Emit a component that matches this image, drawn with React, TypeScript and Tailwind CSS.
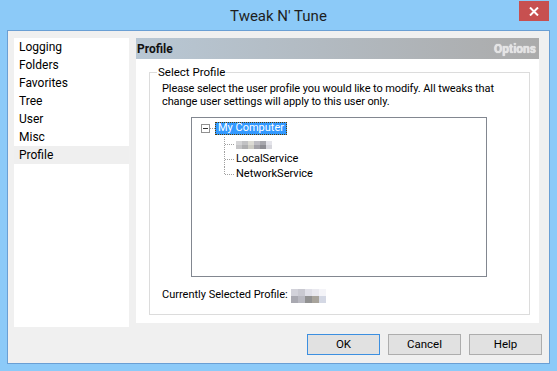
import React from "react";

const menu = ["Logging", "Folders", "Favorites", "Tree", "User", "Misc", "Profile"];

// pixelated (blurred) user name blocks
const blurTree = [
  ["#d4d4d6", "#c2c2c4", "#dcdbd4", "#bdbcc2", "#a7a7ad", "#e4e4ea"],
  ["#c4c4c6", "#aeaeb0", "#cdccc5", "#a3a2a8", "#8d8d93", "#d6d6dc"],
];
const blurCurrent = [
  ["#d2d2da", "#c9c9d1", "#e0e0e8", "#e9e9ef", "#f4f4f8"],
  ["#a9a9b1", "#b9b9c1", "#929292", "#a8a49c", "#d4d8e4"],
];

function Blur({ rows, w, h }: { rows: string[][]; w: number; h: number }) {
  return (
    <span className="inline-flex flex-col">
      {rows.map((r, i) => (
        <span key={i} className="flex">
          {r.map((c, j) => (
            <span key={j} style={{ background: c, width: w, height: h }} />
          ))}
        </span>
      ))}
    </span>
  );
}

function Branch({ last }: { last?: boolean }) {
  return (
    <svg width="12" height="15" className="shrink-0">
      <line x1="0.5" y1="0" x2="0.5" y2={last ? 7.5 : 15} stroke="#a0a0a0" strokeDasharray="1 1" />
      <line x1="1" y1="7.5" x2="10" y2="7.5" stroke="#a0a0a0" strokeDasharray="1 1" />
    </svg>
  );
}

function Btn({ label, def }: { label: string; def?: boolean }) {
  return (
    <button
      className={
        "w-[73px] h-[21px] flex items-center justify-center text-[11.5px] bg-[#e1e1e1] border " +
        (def ? "border-[#3c8fe0]" : "border-[#adadad]")
      }
    >
      {label}
    </button>
  );
}

export default function App() {
  return (
    <div className="w-[557px] h-[371px] bg-[#8ccaf8] flex flex-col font-[Roboto,sans-serif] text-black">
      <div className="h-[30px] relative flex items-center justify-center text-[15px] text-[#1e1e1e] pt-[2px]">
        Tweak N' Tune
        <div className="absolute right-[8px] top-[1px] w-[30px] h-[20px] bg-[#c75050] flex items-center justify-center">
          <svg width="10" height="9" viewBox="0 0 10 9">
            <path d="M1 0.5 L9 8.5 M9 0.5 L1 8.5" stroke="#fff" strokeWidth="2" />
          </svg>
        </div>
      </div>

      <div className="mx-[7px] h-[334px] border border-[#6a9fd4] bg-[#f0f0f0] flex flex-col pt-[7px] pl-[6px] pr-[7px]">
        <div className="flex gap-[7px] h-[289px]">
          {/* left menu */}
          <div className="w-[115px] h-[289px] bg-white text-[12px]">
            {menu.map((m) => (
              <div
                key={m}
                className={"h-[18px] flex items-center pl-[5px] " + (m === "Profile" ? "bg-[#efefef]" : "")}
              >
                {m}
              </div>
            ))}
          </div>

          {/* right panel */}
          <div className="w-[403px] h-[285px] flex flex-col">
            <div className="h-[21px] flex items-center justify-between pl-[1px] pr-[3px] bg-linear-to-r from-[#b8c7d4] to-[#ababab]">
              <span className="text-[12px] font-bold text-[#111]">Profile</span>
              <span className="text-[12px] font-bold text-[#e4e4e4] [text-shadow:0_0_1px_#ffffff]">Options</span>
            </div>
            <div className="flex-1 bg-white pl-[13px] pt-[13px]">
              <div className="relative w-[381px] h-[243px] border border-[#dcdcdc] pl-[12px] pt-[9px] text-[11px]">
                <span className="absolute -top-[8px] left-[7px] bg-white px-[1px] text-[11.5px] leading-[14px]">
                  Select Profile
                </span>
                <p className="leading-[13px] whitespace-nowrap tracking-[-0.1px]">
                  Please select the user profile you would like to modify. All tweaks that
                  <br />
                  change user settings will apply to this user only.
                </p>

                <div className="ml-[29px] mt-[9px] w-[296px] h-[160px] border border-[#828790] bg-white pt-[3px]">
                  <div className="h-[15px] flex items-center pl-[9px]">
                    <span className="w-[9px] h-[9px] border border-[#919191] bg-white flex items-center justify-center shrink-0">
                      <span className="w-[5px] h-[1px] bg-[#333]" />
                    </span>
                    <svg width="5" height="1" className="shrink-0">
                      <line x1="0" y1="0.5" x2="5" y2="0.5" stroke="#a0a0a0" strokeDasharray="1 1" />
                    </svg>
                    <span className="h-[13px] flex items-center px-[2px] bg-[#3399ff] text-white border border-dotted border-[#5a3c00]">
                      My Computer
                    </span>
                  </div>
                  <div className="ml-[32px] pt-[1px]">
                    <div className="h-[15px] flex items-center">
                      <Branch />
                      <Blur rows={blurTree} w={6} h={4} />
                    </div>
                    <div className="h-[15px] flex items-center">
                      <Branch />
                      <span>LocalService</span>
                    </div>
                    <div className="h-[15px] flex items-center">
                      <Branch last />
                      <span>NetworkService</span>
                    </div>
                  </div>
                </div>

                <div className="mt-[12px] h-[13px] flex items-center gap-[3px]">
                  <span>Currently Selected Profile:</span>
                  <Blur rows={blurCurrent} w={7} h={7} />
                </div>
              </div>
            </div>
          </div>
        </div>

        <div className="mt-[7px] flex justify-end gap-[8px]">
          <Btn label="OK" def />
          <Btn label="Cancel" />
          <Btn label="Help" />
        </div>
      </div>
    </div>
  );
}
